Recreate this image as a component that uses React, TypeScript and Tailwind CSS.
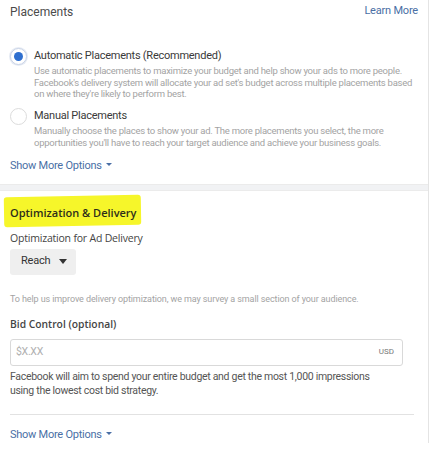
import React from 'react';

const ROBOTO = "font-['Roboto','Liberation_Sans',sans-serif]";
const OPEN = "font-['Open_Sans','Liberation_Sans',sans-serif]";

const Caret = () => (
  <svg width="6" height="3" viewBox="0 0 6 3" className="inline-block ml-[4px] mb-[2px]">
    <path d="M0 0h6L3 3z" fill="currentColor" />
  </svg>
);

const Radio: React.FC<{ checked?: boolean }> = ({ checked }) => (
  <div
    className={`w-[17px] h-[17px] rounded-full border flex items-center justify-center shrink-0 bg-white ${
      checked ? 'border-[#c9d3e6] shadow-[0_0_0_1px_#e6ebf4]' : 'border-[#dcdcdc]'
    }`}
  >
    {checked && <div className="w-[9px] h-[9px] rounded-full bg-[#2f6fcf]" />}
  </div>
);

const OPTIONS = [
  {
    checked: true,
    title: 'Automatic Placements (Recommended)',
    desc: "Use automatic placements to maximize your budget and help show your ads to more people. Facebook's delivery system will allocate your ad set's budget across multiple placements based on where they're likely to perform best.",
  },
  {
    checked: false,
    title: 'Manual Placements',
    desc: "Manually choose the places to show your ad. The more placements you select, the more opportunities you'll have to reach your target audience and achieve your business goals.",
  },
];

export default function App() {
  return (
    <div className={`w-[432px] h-[456px] bg-white overflow-hidden ${ROBOTO}`}>
      <div className="w-[429px] border-r border-[#e4e4e4]">
        {/* Placements */}
        <div className="bg-white pl-[10px] pr-[10px] pt-[3px] pb-[10px]">
          <div className="flex items-center justify-between h-[17px] pr-[2px]">
            <span className="text-[12px] text-[#4b4b4b]">Placements</span>
            <span className="text-[11px] tracking-[-0.2px] text-[#4a6fa5] mr-[-2px]">Learn More</span>
          </div>

          <div className="mt-[27px] space-y-[7px]">
            {OPTIONS.map(o => (
              <div key={o.title} className="flex gap-[7px]">
                <div className="pt-[1px]">
                  <Radio checked={o.checked} />
                </div>
                <div>
                  <p className="text-[11px] tracking-[-0.25px] leading-[17px] text-[#3a3a3a]">{o.title}</p>
                  <p className="text-[9.5px] tracking-[-0.25px] leading-[11.7px] text-[#a3a3a3] mt-[1px]">{o.desc}</p>
                </div>
              </div>
            ))}
          </div>

          <p className="mt-[9px] text-[11px] tracking-[-0.25px] text-[#4a6fa5] leading-[16px]">
            Show More Options<Caret />
          </p>
        </div>

        <div className="h-[7px] bg-[#f1f2f4] border-y border-[#ebebeb]" />

        {/* Optimization & Delivery */}
        <div className="bg-white pl-[10px] pr-[14px] pt-[8px]">
          <div className={`${OPEN} inline-block relative`}>
            <span className="absolute -left-[6px] -right-[5px] -top-[3px] -bottom-[3px] bg-[#f6f62a] rounded-[3px] -rotate-[1deg]" />
            <span className="relative text-[11px] font-semibold text-[#2e2e1a] leading-[16px]">Optimization &amp; Delivery</span>
          </div>

          <p className={`${OPEN} mt-[6px] text-[10.5px] tracking-[-0.2px] text-[#444] leading-[16px]`}>Optimization for Ad Delivery</p>

          <div className="mt-[3px] inline-flex items-center h-[26px] pl-[11px] pr-[9px] bg-[#efefef] rounded-[3px] text-[11px] tracking-[-0.2px] text-[#333]">
            Reach
            <svg width="8" height="5" viewBox="0 0 8 5" className="ml-[9px]">
              <path d="M0 0h8L4 5z" fill="#333" />
            </svg>
          </div>

          <p className="mt-[18px] text-[9px] tracking-[-0.1px] text-[#a3a3a3] leading-[12px]">
            To help us improve delivery optimization, we may survey a small section of your audience.
          </p>

          <p className={`${OPEN} mt-[12px] text-[10.3px] font-semibold text-[#444] leading-[15px]`}>Bid Control (optional)</p>

          <div className="mt-[7px] w-[393px] h-[27px] border border-[#d9d9d9] rounded-[3px] flex items-center justify-between pl-[5px] pr-[8px]">
            <span className="text-[10.5px] tracking-[-0.3px] text-[#b0b0b0]">$X.XX</span>
            <span className="text-[8px] text-[#777]">USD</span>
          </div>

          <p className="mt-[4px] text-[10.5px] tracking-[-0.3px] text-[#555] leading-[14.5px] pr-[20px]">
            Facebook will aim to spend your entire budget and get the most 1,000 impressions using the lowest cost bid strategy.
          </p>

          <div className="mt-[15px] h-px bg-[#e2e2e2]" />

          <p className="mt-[12px] text-[11px] tracking-[-0.25px] text-[#4a6fa5] leading-[16px]">
            Show More Options<Caret />
          </p>
        </div>
      </div>
    </div>
  );
}
